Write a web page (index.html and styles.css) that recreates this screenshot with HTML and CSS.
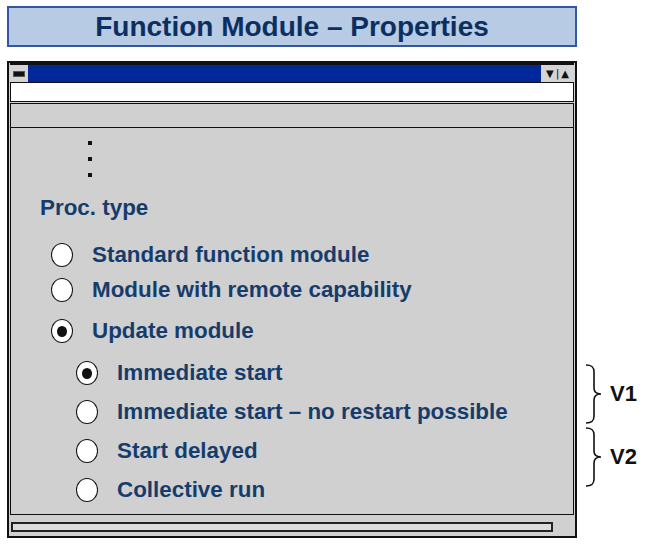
FILE: index.html
```html
<!DOCTYPE html>
<html>
<head>
  <title>Function Module - Properties</title>
  <link rel="stylesheet" href="styles.css">
</head>
<body>

<div class="slide">
  <header class="title-box">
    <h1>Function Module &ndash; Properties</h1>
  </header>

  <div class="window">
    <div class="titlebar">
      <span class="sysmenu"><span class="sysmenu-bar"></span></span>
      <span class="caption"></span>
      <span class="sizer">&#9660;<span class="sizer-sep">|</span>&#9650;</span>
    </div>
    <div class="field"></div>
    <div class="band"></div>

    <div class="content">
      <div class="dots">
        <span></span><span></span><span></span>
      </div>

      <div class="group-label">Proc. type</div>

      <ul class="options">
        <li class="option"><span class="radio"></span>Standard function module</li>
        <li class="option"><span class="radio"></span>Module with remote capability</li>
        <li class="option"><span class="radio checked"></span>Update module</li>
      </ul>

      <ul class="options sub">
        <li class="option"><span class="radio checked"></span>Immediate start</li>
        <li class="option"><span class="radio"></span>Immediate start &ndash; no restart possible</li>
        <li class="option"><span class="radio"></span>Start delayed</li>
        <li class="option"><span class="radio"></span>Collective run</li>
      </ul>
    </div>

    <div class="footer">
      <div class="hscroll"></div>
    </div>
  </div>
</div>

<!-- version brackets beside the window -->
<div class="notes">
  <div class="note">
    <svg class="brace" width="18" height="60" viewBox="0 0 18 60">
      <path d="M1 1 C7 1 9 3 9 8 L9 24 C9 28 11 30 16 30 C11 30 9 32 9 36 L9 52 C9 57 7 59 1 59" fill="none" stroke="#111" stroke-width="1.6"/>
    </svg>
    <span class="note-label">V1</span>
  </div>
  <div class="note">
    <svg class="brace" width="18" height="60" viewBox="0 0 18 60">
      <path d="M1 1 C7 1 9 3 9 8 L9 24 C9 28 11 30 16 30 C11 30 9 32 9 36 L9 52 C9 57 7 59 1 59" fill="none" stroke="#111" stroke-width="1.6"/>
    </svg>
    <span class="note-label">V2</span>
  </div>
</div>

</body>
</html>
```
FILE: styles.css
```css
body {
  margin: 0;
  padding: 6px 0 0 7px;
  font-family: "Liberation Sans", Arial, sans-serif;
  background: #fff;
  display: flex;
  align-items: flex-start;
}

/* Title box */
.slide {
  width: 570px;
}

.title-box {
  box-sizing: border-box;
  height: 41px;
  background: #b7cbe5;
  border: 2px solid #3455a2;
  display: flex;
  align-items: center;
  justify-content: center;
}

.title-box h1 {
  margin: 0;
  font-size: 28px;
  font-weight: bold;
  color: #0d2f5f;
  line-height: 1;
}

/* Dialog window */
.window {
  box-sizing: border-box;
  margin-top: 14px;
  height: 477px;
  border: 2px solid #111;
  background: #d0d0d0;
  padding: 0 1px;
  display: flex;
  flex-direction: column;
}

.titlebar {
  box-sizing: border-box;
  height: 19px;
  border-top: 2px solid #111;
  display: flex;
}

.sysmenu {
  width: 18px;
  background: #d4d4d4;
  display: flex;
  align-items: center;
  justify-content: center;
}

.sysmenu-bar {
  width: 10px;
  height: 4px;
  background: #111;
  border: 1px solid #555;
}

.caption {
  flex: 1;
  background: #00289b;
}

.sizer {
  width: 33px;
  background: #d4d4d4;
  font-family: "DejaVu Sans", sans-serif;
  font-size: 10px;
  color: #111;
  display: flex;
  align-items: center;
  justify-content: center;
  gap: 2px;
}

.sizer-sep {
  font-size: 11px;
}

.field {
  box-sizing: border-box;
  height: 20px;
  background: #fff;
  border: 1px solid #111;
}

.band {
  box-sizing: border-box;
  height: 24px;
  margin-top: 1px;
  border: 1px solid #111;
  border-bottom: none;
}

.content {
  box-sizing: border-box;
  height: 388px;
  border: 1px solid #111;
  padding-top: 13px;
  color: #163c6c;
  font-weight: bold;
  font-size: 22.4px;
}

.dots {
  margin-left: 77px;
  display: flex;
  flex-direction: column;
  gap: 12px;
}

.dots span {
  width: 4px;
  height: 4px;
  background: #111;
}

.group-label {
  margin: 18px 0 0 29px;
  line-height: 26px;
}

/* Radio options */
.options {
  list-style: none;
  margin: 22px 0 0 40px;
  padding: 0;
  display: flex;
  flex-direction: column;
}

.options .option:nth-child(2) {
  margin-top: 11px;
}

.options .option:nth-child(3) {
  margin-top: 17px;
}

.options.sub {
  margin: 18px 0 0 65px;
  gap: 15px;
}

.options.sub .option {
  margin-top: 0;
}

.option {
  height: 24px;
  line-height: 24px;
  display: flex;
  align-items: center;
  gap: 19px;
}

.radio {
  box-sizing: border-box;
  width: 22px;
  height: 24px;
  border: 1.5px solid #111;
  border-radius: 50%;
  background: #fff;
  display: flex;
  align-items: center;
  justify-content: center;
}

.radio.checked::after {
  content: "";
  width: 10px;
  height: 11px;
  border-radius: 50%;
  background: #111;
}

.footer {
  flex: 1;
  padding: 7px 0 0 1px;
}

.hscroll {
  box-sizing: border-box;
  width: 542px;
  height: 10px;
  border: 2px solid #222;
  background: #dcdcdc;
}

/* Version brackets */
.notes {
  padding-top: 358px;
  display: flex;
  flex-direction: column;
  gap: 3px;
}

.note {
  height: 60px;
  display: flex;
  align-items: center;
}

.brace {
  margin-left: 8px;
}

.note-label {
  margin-left: 7px;
  font-size: 22px;
  font-weight: bold;
  color: #111;
}
```
